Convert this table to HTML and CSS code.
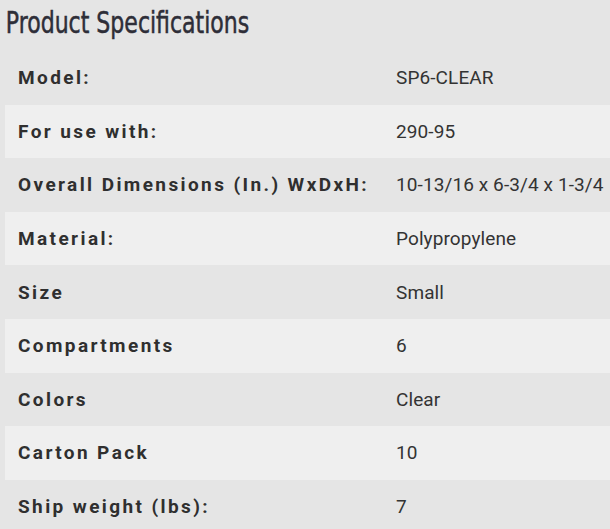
FILE: index.html
```html
<!DOCTYPE html>
<html>
<head>
<meta charset="utf-8">
<link rel="stylesheet" href="styles.css">
</head>
<body>
<div class="page">
  <div class="title-wrap">
    <h2 class="title">Product Specifications</h2>
  </div>
  <table class="specs">
    <tr><th>Model:</th><td>SP6-CLEAR</td></tr>
    <tr><th>For use with:</th><td>290-95</td></tr>
    <tr><th>Overall Dimensions (In.) WxDxH:</th><td>10-13/16 x 6-3/4 x 1-3/4</td></tr>
    <tr><th>Material:</th><td>Polypropylene</td></tr>
    <tr><th>Size</th><td>Small</td></tr>
    <tr><th>Compartments</th><td>6</td></tr>
    <tr><th>Colors</th><td>Clear</td></tr>
    <tr><th>Carton Pack</th><td>10</td></tr>
    <tr><th>Ship weight (lbs):</th><td>7</td></tr>
  </table>
</div>
</body>
</html>
```
FILE: styles.css
```css
html, body {
  margin: 0;
  padding: 0;
  background: #e5e5e5;
  overflow: hidden;
}
.page {
  width: 605px;
  padding: 0 0 0 5px;
}
.title-wrap {
  height: 51px;
  overflow: hidden;
}
.title {
  margin: 0;
  padding: 4px 0 0 1px;
  font-family: "DejaVu Sans Condensed", "DejaVu Sans", sans-serif;
  font-stretch: condensed;
  font-weight: normal;
  font-size: 31px;
  letter-spacing: 0;
  line-height: 36px;
  color: #2e2e38;
  -webkit-text-stroke: 0.5px #2e2e38;
  white-space: nowrap;
  transform: scaleX(0.79);
  transform-origin: left top;
}
.specs {
  border-collapse: collapse;
  width: 700px;
  font-family: Roboto, "Liberation Sans", sans-serif;
  color: #333;
}
.specs tr {
  height: 53.6px;
}
.specs tr:nth-child(even) {
  background: #efefef;
}
.specs th {
  width: 365px;
  text-align: left;
  font-size: 19px;
  font-weight: bold;
  letter-spacing: 2.4px;
  padding: 0 0 0 13px;
  color: #2f2f2f;
  white-space: nowrap;
}
.specs td {
  padding: 0 0 0 13px;
  font-size: 19px;
  font-weight: normal;
  letter-spacing: 0.1px;
  color: #333;
  white-space: nowrap;
}
```
